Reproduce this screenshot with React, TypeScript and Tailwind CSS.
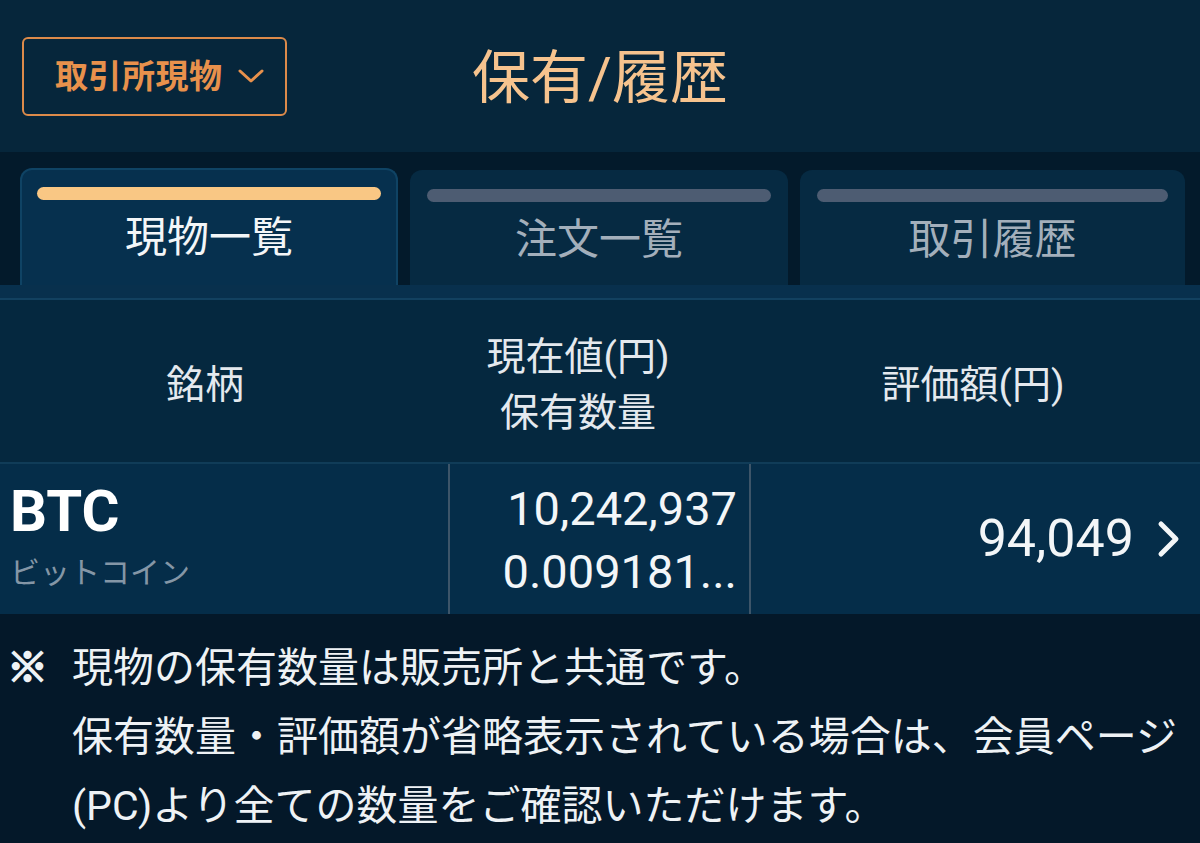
import React from "react";

const FONT = { fontFamily: "Roboto, 'Noto Sans CJK JP', sans-serif" };

function Tab({ label, active }: { label: string; active?: boolean }) {
  return (
    <div
      className={
        active
          ? "flex flex-col h-[117px] rounded-t-[12px] bg-[#06304e] border-2 border-b-0 border-[#0f4364] px-[15px]"
          : "flex flex-col h-[115px] rounded-t-[12px] bg-[#062a42] px-[17px]"
      }
    >
      <div
        className={
          active
            ? "mt-[17px] h-[13px] rounded-full bg-[#f9c784]"
            : "mt-[19px] h-[13px] rounded-full bg-[#4d5c72]"
        }
      />
      <div
        className={
          active
            ? "mt-[16px] text-center text-[42px] leading-[44px] text-[#f3f6f8]"
            : "mt-[16px] text-center text-[42px] leading-[44px] text-[#a3afbb]"
        }
      >
        {label}
      </div>
    </div>
  );
}

export default function App() {
  return (
    <div className="w-[1200px] h-[843px] bg-[#041829] overflow-hidden" style={FONT}>
      {/* Header */}
      <div className="h-[152px] bg-[#06263b] grid grid-cols-[1fr_auto_1fr] items-center">
        <div className="pl-[22px]">
          <div className="w-[265px] h-[79px] rounded-[6px] border-2 border-[#dc8a4a] flex items-center pl-[31px] gap-[14px]">
            <span className="text-[33px] font-bold text-[#e8914c] leading-none tracking-[0.5px]">取引所現物</span>
            <svg width="28" height="18" viewBox="0 0 28 18" fill="none">
              <path d="M3 4 L14 14 L25 4" stroke="#e8914c" strokeWidth="3" strokeLinecap="round" strokeLinejoin="round" />
            </svg>
          </div>
        </div>
        <div className="text-[58px] leading-none text-[#f6c38e] mt-[4px]">保有/履歴</div>
        <div />
      </div>

      {/* Tabs */}
      <div className="bg-[#031a2b] pt-[16px] pl-[20px] grid grid-cols-[378px_378px_385px] gap-[12px] items-end">
        <Tab label="現物一覧" active />
        <Tab label="注文一覧" />
        <Tab label="取引履歴" />
      </div>
      <div className="h-[15px] bg-[#08304d] border-b-2 border-[#124160]" />

      {/* Table header */}
      <div className="h-[162px] pt-[8px] bg-[#05283f] grid grid-cols-[410px_336px_454px] items-center text-[39px] text-[#e4e9ee] leading-[56px] text-center">
        <div>銘柄</div>
        <div>
          <div>現在値(円)</div>
          <div>保有数量</div>
        </div>
        <div>評価額(円)</div>
      </div>
      <div className="h-[2px] bg-[#103c58]" />

      {/* Data row */}
      <div className="h-[150px] bg-[#052d49] grid grid-cols-[448px_2px_299px_2px_1fr]">
        <div className="pl-[10px] flex flex-col justify-center">
          <div className="text-[58px] font-bold text-white leading-[60px] -mt-[4px]">BTC</div>
          <div className="text-[30px] text-[#8496a6] leading-[40px] mt-[12px]">ビットコイン</div>
        </div>
        <div className="bg-[#3d5569]" />
        <div className="pr-[12px] flex flex-col justify-center items-end text-[47px] text-[#f3f6f8] leading-[63px] mt-[2px]">
          <div>10,242,937</div>
          <div>0.009181...</div>
        </div>
        <div className="bg-[#3d5569]" />
        <div className="pr-[18px] flex items-center justify-end gap-[22px] text-[52px] text-[#f3f6f8]">
          <span className="leading-none">94,049</span>
          <svg width="26" height="40" viewBox="0 0 26 40" fill="none">
            <path d="M5 5 L20 20 L5 35" stroke="#f3f6f8" strokeWidth="5" strokeLinecap="round" strokeLinejoin="round" />
          </svg>
        </div>
      </div>

      {/* Note */}
      <div className="bg-[#041829] pt-[20px] flex text-[41px] leading-[69px] text-[#eef2f5]">
        <div className="w-[72px] pl-[7px] font-bold [-webkit-text-stroke:2px_#eef2f5]">※</div>
        <div className="whitespace-nowrap">
          <div>現物の保有数量は販売所と共通です。</div>
          <div>保有数量・評価額が省略表示されている場合は、会員ページ</div>
          <div>(PC)より全ての数量をご確認いただけます。</div>
        </div>
      </div>
    </div>
  );
}
